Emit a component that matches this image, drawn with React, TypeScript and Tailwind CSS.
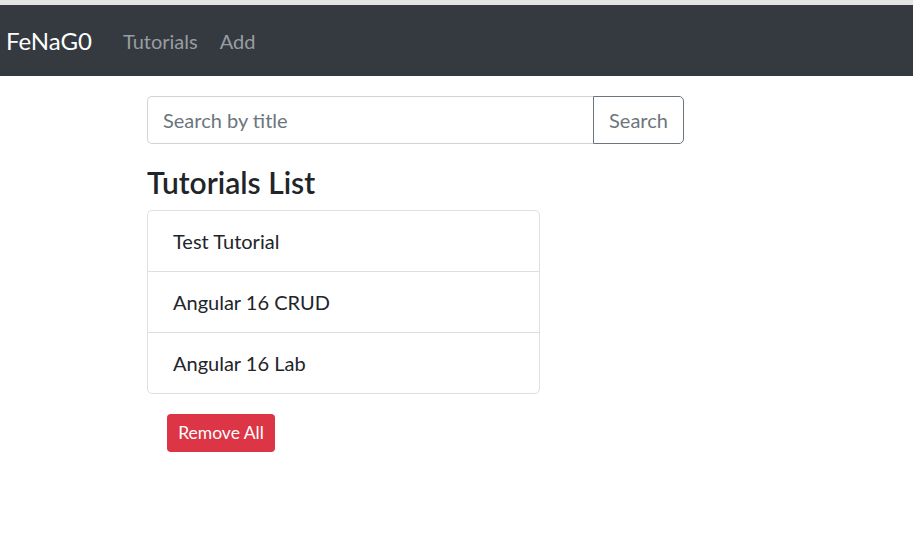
export default function App() {
  const tutorials = ["Test Tutorial", "Angular 16 CRUD", "Angular 16 Lab"];

  return (
    <div className="min-h-[533px] bg-white font-['Lato',sans-serif] text-[#212529]">
      {/* top strip */}
      <div className="h-[5px] bg-[#e4e4e4]" />

      {/* navbar */}
      <nav className="flex h-[71px] items-center bg-[#343a40] pl-[6px]">
        <span className="text-[24px] leading-none text-white">FeNaG0</span>
        <div className="ml-[31px] flex gap-[22px] text-[20px] text-[#9a9da0]">
          <span>Tutorials</span>
          <span>Add</span>
        </div>
      </nav>

      <div className="pl-[147px] pt-[20px]">
        {/* search */}
        <div className="flex h-[48px] w-[537px]">
          <input
            className="h-full flex-1 rounded-l-[5px] border border-r-0 border-[#ced4da] px-[15px] text-[20px] outline-none placeholder:text-[#6c757d]"
            placeholder="Search by title"
          />
          <button className="h-full w-[91px] rounded-r-[5px] border border-[#6c757d] text-[20px] text-[#6c757d]">
            Search
          </button>
        </div>

        <h4 className="mt-[20px] mb-[10px] text-[30px] font-semibold leading-[36px]">Tutorials List</h4>

        {/* list */}
        <ul className="w-[393px] rounded-[5px] border border-[#dfdfdf]">
          {tutorials.map((t, i) => (
            <li
              key={t}
              className={`px-[25px] py-[15px] text-[20px] leading-[30px] ${i > 0 ? "border-t border-[#dfdfdf]" : ""}`}
            >
              {t}
            </li>
          ))}
        </ul>

        <button className="ml-[20px] mt-[20px] h-[38px] w-[108px] rounded-[4px] bg-[#dc3545] text-[17.5px] text-white">
          Remove All
        </button>
      </div>
    </div>
  );
}
